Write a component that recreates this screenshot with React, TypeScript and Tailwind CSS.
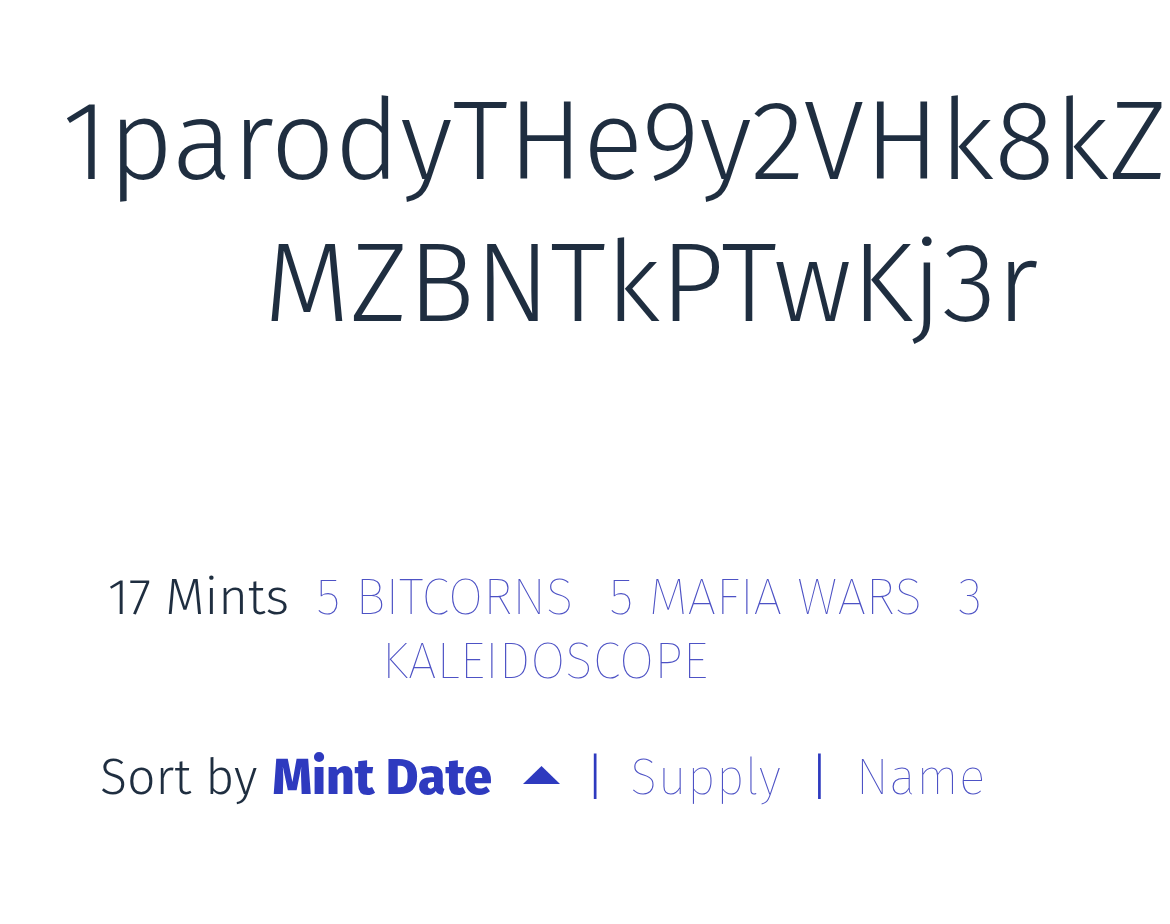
import React from "react";

const stats = [
    { count: 5, label: "BITCORNS" },
    { count: 5, label: "MAFIA WARS" },
    { count: 3, label: "KALEIDOSCOPE" },
];

export default function App() {
    return (
        <div className="w-full min-h-[924px] overflow-hidden bg-white text-[#1f2e40] font-['Fira_Sans','Open_Sans',sans-serif]">
            <h1 className="ml-[62px] w-[1178px] pt-[71px] text-center text-[112px] leading-[142px] font-light break-all">
                <span className="block whitespace-nowrap pr-[76px]">1parodyTHe9y2VHk8kZ</span>
                <span className="block">MZBNTkPTwKj3r</span>
            </h1>

            <div className="mt-[210px] ml-[93px] w-[904px] text-center text-[51px] leading-[64px] font-light">
                <span>17 Mints</span>
                {stats.map((s, i) => (
                    <a
                        key={s.label}
                        href="#"
                        className={(i === 0 ? "ml-[27px]" : "ml-[36px]") + " text-[#4d52c5] font-thin"}
                    >
                        {s.count} {s.label}
                    </a>
                ))}
            </div>

            <div className="mt-[52px] ml-[100px] flex items-center text-[50px] leading-[64px] font-light">
                <span>Sort by</span>
                <button className="ml-[15px] font-extrabold text-[#2e3abf]">Mint Date</button>
                <svg className="ml-[31px] mt-[-4px]" width="37" height="18" viewBox="0 0 37 18">
                    <polygon points="18.5,0 37,18 0,18" fill="#2e3abf" />
                </svg>
                <span className="ml-[25px] text-[#2e3abf] font-light">|</span>
                <button className="ml-[25px] text-[#4d52c5] font-thin tracking-[0.5px]">Supply</button>
                <span className="ml-[28px] text-[#2e3abf] font-light">|</span>
                <button className="ml-[26px] text-[#4d52c5] font-thin tracking-[0.5px]">Name</button>
            </div>
        </div>
    );
}
